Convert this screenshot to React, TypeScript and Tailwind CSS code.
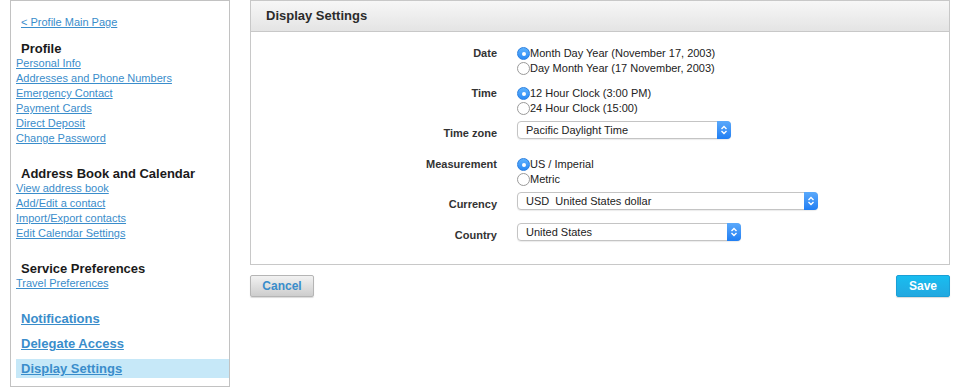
import { ReactNode } from "react";

const profileLinks = [
  "Personal Info",
  "Addresses and Phone Numbers",
  "Emergency Contact",
  "Payment Cards",
  "Direct Deposit",
  "Change Password",
];

const addressLinks = [
  "View address book",
  "Add/Edit a contact",
  "Import/Export contacts",
  "Edit Calendar Settings",
];

function SideLink({ children }: { children: ReactNode }) {
  return (
    <a href="#" className="block h-[15px] leading-[15px] text-[11px] text-[#3a8dcb] underline">
      {children}
    </a>
  );
}

function SideHeading({ children, top }: { children: ReactNode; top: string }) {
  return (
    <div className={`${top} pl-[5px] h-[15px] leading-[15px] text-[13px] font-bold text-[#1a1a1a]`}>
      {children}
    </div>
  );
}

function Radio({ checked, label }: { checked?: boolean; label: string }) {
  return (
    <label className="flex items-center h-[15px] text-[11px] text-[#222]">
      {checked ? (
        <span className="w-[13px] h-[13px] rounded-full bg-gradient-to-b from-[#5db1fd] to-[#2a8af5] border border-[#2b7fe0] flex items-center justify-center">
          <span className="w-[4px] h-[4px] rounded-full bg-white" />
        </span>
      ) : (
        <span className="w-[13px] h-[13px] rounded-full bg-white border border-[#9a9a9a]" />
      )}
      <span>{label}</span>
    </label>
  );
}

function Select({ value, width }: { value: string; width: string }) {
  return (
    <div
      className={`${width} h-[18px] flex items-stretch rounded-[4px] border border-[#c4c4c4] bg-white shadow-[0_1px_1px_rgba(0,0,0,0.08)]`}
    >
      <span className="flex-1 pl-[8px] leading-[16px] text-[11px] text-[#222] whitespace-pre">{value}</span>
      <span className="w-[14px] -my-px -mr-px rounded-r-[4px] bg-gradient-to-b from-[#5aa9fb] to-[#1f7ef3] flex items-center justify-center">
        <svg width="8" height="10" viewBox="0 0 8 10" fill="none" stroke="white" strokeWidth="1.4">
          <path d="M1.5 4 L4 1.5 L6.5 4" />
          <path d="M1.5 6 L4 8.5 L6.5 6" />
        </svg>
      </span>
    </div>
  );
}

function Row({ label, children, top, labelPad }: { label: string; children: ReactNode; top: string; labelPad?: string }) {
  return (
    <div className={`flex ${top}`}>
      <div className={`w-[246px] text-right text-[11px] font-bold leading-[15px] text-[#333] ${labelPad ?? ""}`}>
        {label}
      </div>
      <div className="ml-[20px]">{children}</div>
    </div>
  );
}

export default function App() {
  return (
    <div className="flex w-[960px] h-[387px] bg-white pl-[10px] font-['Liberation_Sans',Arial,sans-serif]">
      <aside className="w-[220px] h-[387px] border border-[#c2c2c2] pl-[5px] pt-[14px]">
        <div className="pl-[5px]">
          <SideLink>&lt; Profile Main Page</SideLink>
        </div>
        <SideHeading top="mt-[11px]">Profile</SideHeading>
        {profileLinks.map((l) => (
          <SideLink key={l}>{l}</SideLink>
        ))}
        <SideHeading top="mt-[20px]">Address Book and Calendar</SideHeading>
        {addressLinks.map((l) => (
          <SideLink key={l}>{l}</SideLink>
        ))}
        <SideHeading top="mt-[20px]">Service Preferences</SideHeading>
        <SideLink>Travel Preferences</SideLink>
        <div className="mt-[18px] flex flex-col gap-[6px]">
          {["Notifications", "Delegate Access", "Display Settings"].map((l, i) => (
            <a
              key={l}
              href="#"
              className={`block h-[19px] leading-[19px] pl-[5px] text-[13px] font-bold text-[#3a8dcb] underline ${
                i === 2 ? "bg-[#c6e8f8]" : ""
              }`}
            >
              {l}
            </a>
          ))}
        </div>
      </aside>

      <main className="ml-[20px] w-[700px] flex flex-col">
        <section className="h-[265px] border border-[#c8c8c8]">
          <div className="h-[31px] border-b border-[#c8c8c8] bg-gradient-to-b from-[#f7f7f7] to-[#e4e4e4] pl-[15px] leading-[30px] text-[13px] font-bold text-[#2b2b2b]">
            Display Settings
          </div>
          <div className="pt-[14px]">
            <Row label="Date" top="">
              <Radio checked label="Month Day Year (November 17, 2003)" />
              <Radio label="Day Month Year (17 November, 2003)" />
            </Row>
            <Row label="Time" top="mt-[10px]">
              <Radio checked label="12 Hour Clock (3:00 PM)" />
              <Radio label="24 Hour Clock (15:00)" />
            </Row>
            <Row label="Time zone" top="mt-[5px]" labelPad="h-[18px] pt-[5px]">
              <Select value="Pacific Daylight Time" width="w-[214px]" />
            </Row>
            <Row label="Measurement" top="mt-[18px]">
              <Radio checked label="US / Imperial" />
              <Radio label="Metric" />
            </Row>
            <Row label="Currency" top="mt-[5px]" labelPad="h-[18px] pt-[5px]">
              <Select value="USD  United States dollar" width="w-[301px]" />
            </Row>
            <Row label="Country" top="mt-[13px]" labelPad="h-[18px] pt-[5px]">
              <Select value="United States" width="w-[224px]" />
            </Row>
          </div>
        </section>
        <div className="mt-[10px] flex justify-between">
          <button className="w-[64px] h-[22px] rounded-[2px] border border-[#b5b5b5] bg-gradient-to-b from-[#f2f2f2] to-[#cdcdcd] text-[12px] font-bold text-[#3a8dcb] shadow-[0_1px_1px_rgba(0,0,0,0.15)]">
            Cancel
          </button>
          <button className="w-[54px] h-[22px] rounded-[2px] border border-[#1a9fd6] bg-gradient-to-b from-[#18bdf0] to-[#22a8e0] text-[12px] font-bold text-white shadow-[0_1px_1px_rgba(0,0,0,0.15)]">
            Save
          </button>
        </div>
      </main>
    </div>
  );
}
